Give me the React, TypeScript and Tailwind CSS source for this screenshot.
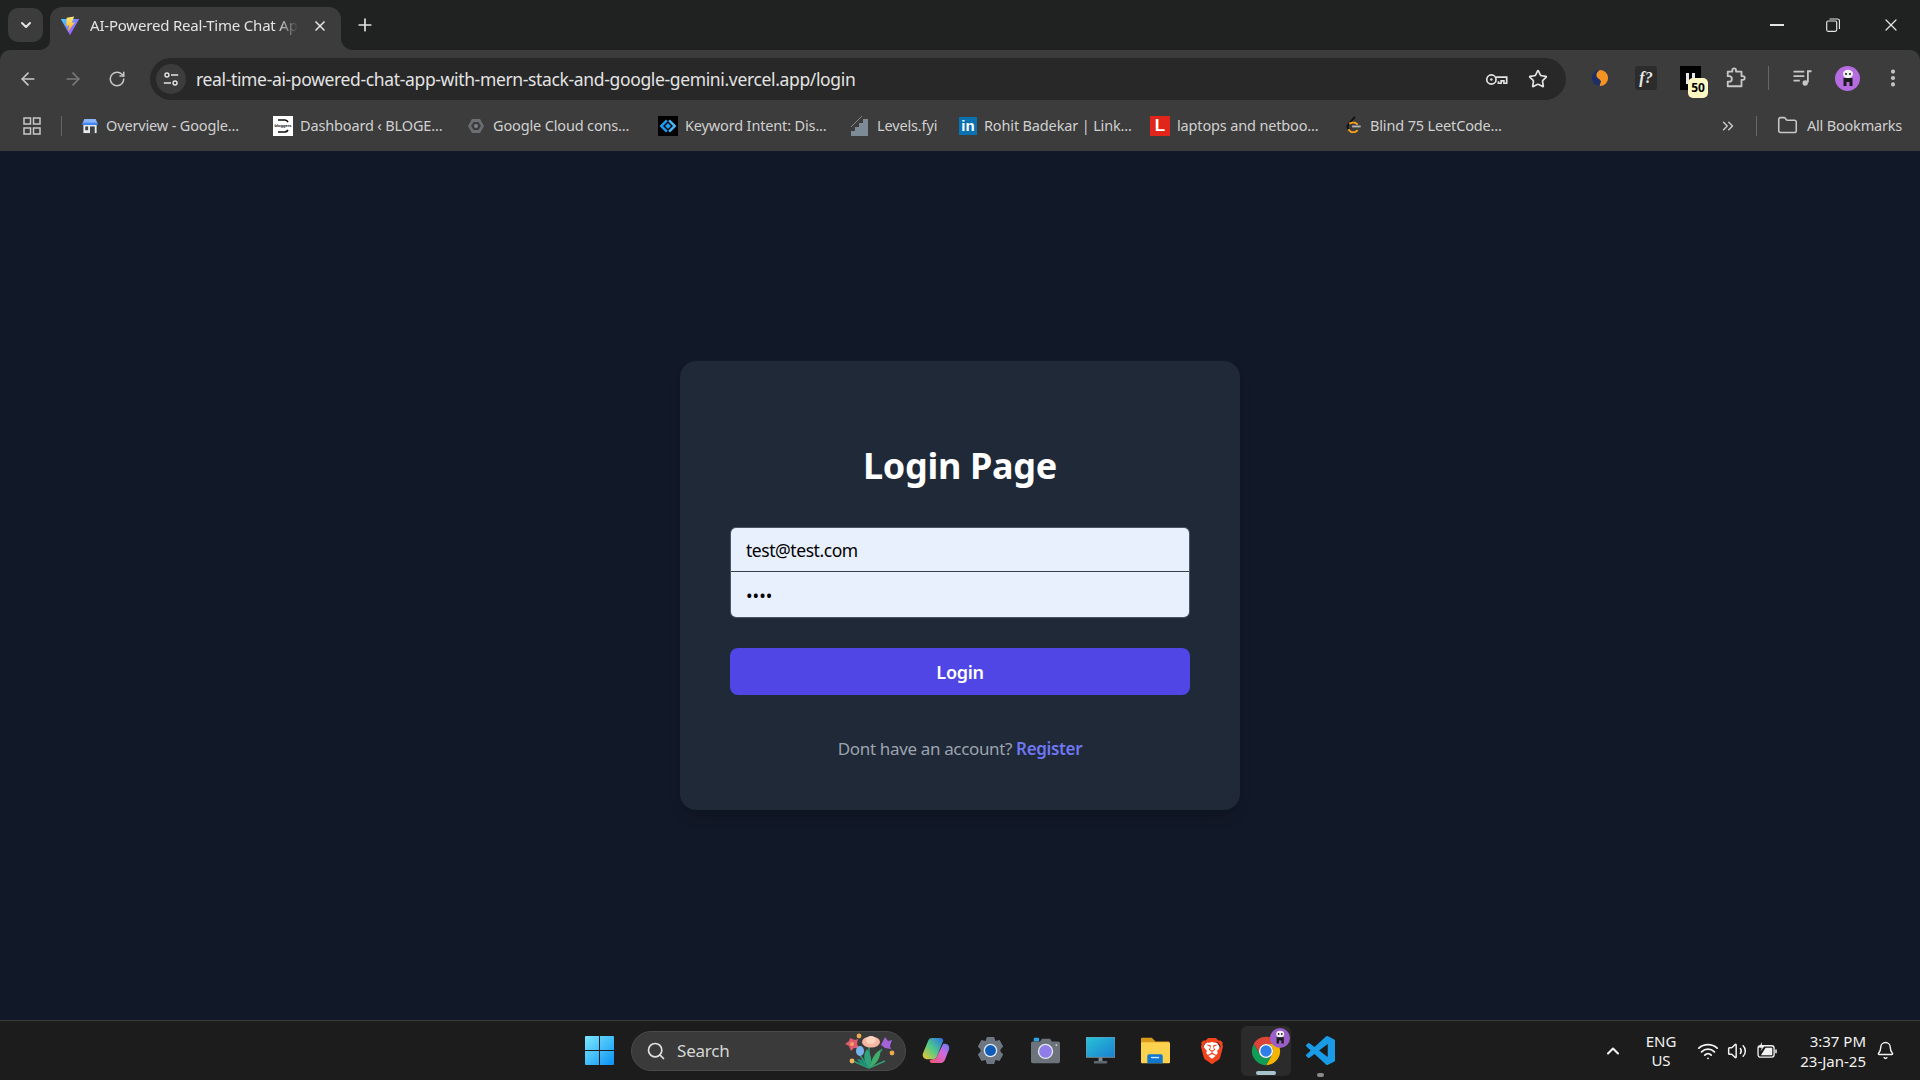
import { ArrowLeft, ArrowRight, RotateCw, Star, X, Plus, ChevronDown, ChevronUp, ChevronsRight, Folder, Search, Wifi, Volume2, Bell, EllipsisVertical } from "lucide-react";
import { SiBrave } from "react-icons/si";

const font = "font-['Noto_Sans','Open_Sans',sans-serif]";

function ViteIcon() {
  return (
    <svg viewBox="0 0 24 24" className="w-[20px] h-[20px] shrink-0">
      <defs>
        <linearGradient id="vitebg" x1="0" y1="0" x2="1" y2="1">
          <stop offset="0" stopColor="#41d1ff" />
          <stop offset="1" stopColor="#bd34fe" />
        </linearGradient>
        <linearGradient id="vitebolt" x1="0" y1="0" x2="0" y2="1">
          <stop offset="0" stopColor="#ffea83" />
          <stop offset="1" stopColor="#ffa800" />
        </linearGradient>
      </defs>
      <path d="M1 3.5 L23 3.5 L12 23 Z" fill="url(#vitebg)" />
      <path d="M17 0.5 L8 2 L7.5 12 L11 11 L9.5 19 L18 7.5 L14 8.5 Z" fill="url(#vitebolt)" />
    </svg>
  );
}

function TuneIcon() {
  return (
    <svg viewBox="0 0 20 20" className="w-[18px] h-[18px]" fill="none" stroke="#e3e3e3" strokeWidth="1.6">
      <circle cx="5.5" cy="5.5" r="2.2" />
      <path d="M10 5.5h8M2 14.5h8" />
      <circle cx="14.5" cy="14.5" r="2.2" />
    </svg>
  );
}

function KeyIcon() {
  return (
    <svg viewBox="0 0 24 14" className="w-[23px] h-[13px]" fill="none" stroke="#e3e3e3" strokeWidth="1.8">
      <circle cx="6.5" cy="7" r="5" />
      <circle cx="6.5" cy="7" r="1.3" fill="#e3e3e3" stroke="none" />
      <path d="M11.5 4.5H23V11h-3V8.5h-3V11h-3V9" />
    </svg>
  );
}

function AppsIcon() {
  return (
    <svg viewBox="0 0 18 18" className="w-[18px] h-[18px] shrink-0" fill="none" stroke="#c7c7c7" strokeWidth="1.5">
      <rect x="1" y="1" width="6.5" height="6" />
      <rect x="10.5" y="1" width="6.5" height="6" />
      <rect x="1" y="11" width="6.5" height="6" />
      <rect x="10.5" y="11" width="6.5" height="6" />
    </svg>
  );
}

function StoreIcon() {
  return (
    <svg viewBox="0 0 18 18" className="w-[18px] h-[17px]">
      <path d="M3 2h12l2 5H1z" fill="#8ab4f8" />
      <rect x="1" y="6" width="16" height="2.5" fill="#4285f4" />
      <rect x="2" y="8.5" width="14" height="8.5" fill="#e8eaed" />
      <rect x="9" y="10" width="5" height="7" fill="#3c4043" />
      <rect x="4" y="10" width="3" height="4" fill="#3c4043" />
    </svg>
  );
}

function BloggerIcon() {
  return (
    <div className="w-[20px] h-[20px] bg-white relative flex items-center justify-center overflow-hidden">
      <svg viewBox="0 0 20 20" className="absolute inset-0 w-full h-full" fill="none" stroke="#111" strokeWidth="1.6">
        <path d="M5 4h7a4 4 0 0 1 3 2M5 16h7a4 4 0 0 0 3-2" />
      </svg>
      <span className="text-[4px] leading-none text-black font-bold font-['Liberation_Sans',sans-serif]">bloggers</span>
    </div>
  );
}

function CloudIcon() {
  return (
    <svg viewBox="0 0 18 18" className="w-[20px] h-[18px]" fill="none">
      <path d="M5 2h8l4 7-4 7H5L1 9z" fill="#6b6f73" />
      <path d="M6.5 5h5L14 9l-2.5 4h-5L4 9z" fill="#3c3c3c" />
      <circle cx="9" cy="9" r="2" fill="#7d8084" />
    </svg>
  );
}

function KeywordIcon() {
  return (
    <svg viewBox="0 0 20 20" className="w-[20px] h-[20px]">
      <rect width="20" height="20" fill="#000" />
      <path d="M8 3.5L1.5 10 8 16.5l1.800-1.800L5 10l4.800-4.700z" fill="#1d9bf0" />
      <path d="M12 3.5l6.500 6.500-6.500 6.500-1.800-1.800L15 10l-4.800-4.700z" fill="#49b6f5" />
      <path d="M10 7l3 3-3 3-3-3z" fill="#1d9bf0" />
    </svg>
  );
}

function LevelsIcon() {
  return (
    <svg viewBox="0 0 20 20" className="w-[20px] h-[20px]">
      <path d="M1 20v-5h4v-4h4V7h4V3h5v17z" fill="#7c8b96" />
      <path d="M1 11L12 0" stroke="#7c8b96" strokeWidth="1" />
    </svg>
  );
}

function LinkedinIcon() {
  return (
    <div className="w-[18px] h-[18px] bg-[#0a72b1] flex items-center justify-center text-white text-[15px] font-bold leading-none font-['Liberation_Sans',sans-serif]">
      in
    </div>
  );
}

function LaptopIcon() {
  return (
    <div className="w-[20px] h-[20px] bg-[#e1251b] flex items-center justify-center text-white text-[17px] font-bold leading-none font-['Liberation_Sans',sans-serif]">
      L
    </div>
  );
}

function LeetIcon() {
  return (
    <svg viewBox="0 0 18 20" className="w-[18px] h-[19px]" fill="none" strokeWidth="2">
      <path d="M10 1L3 9l-1 2 1 3" stroke="#111" />
      <path d="M3 14l3 3h4l3-2" stroke="#f89f1b" />
      <path d="M4 8l3-1h3l3 2" stroke="#f89f1b" />
      <path d="M7 11h9" stroke="#b3b3b3" />
    </svg>
  );
}

function SphereIcon() {
  return (
    <svg viewBox="0 0 20 20" className="w-[18px] h-[20px]">
      <circle cx="10" cy="10" r="9" fill="#1c2f66" />
      <path d="M10 1a9 9 0 0 1 0 18c-1-1 1-3 1-5 0-3-5-3-5-7 0-3 2-5 4-6z" fill="#f59322" />
    </svg>
  );
}

function PuzzleIcon() {
  return (
    <svg viewBox="0 0 24 24" className="w-[22px] h-[22px]" fill="none" stroke="#c7c7c7" strokeWidth="2">
      <path d="M3 5h5V3.5a2 2 0 0 1 4 0V5h6v5h1.5a2 2 0 0 1 0 4H18v7H3v-5h1.5a3 3 0 0 0 0-6H3z" strokeLinejoin="round" />
    </svg>
  );
}

function MediaIcon() {
  return (
    <svg viewBox="0 0 22 20" className="w-[21px] h-[18px]" fill="none" stroke="#c7c7c7" strokeWidth="2">
      <path d="M1 3h12M1 8h12M1 13h7" />
      <path d="M17 15V2.5h4" />
      <circle cx="14" cy="15.5" r="3" fill="#c7c7c7" stroke="none" />
    </svg>
  );
}

function PandaAvatar({ size }: { size: "lg" | "sm" }) {
  return (
    <div
      className={
        size === "lg"
          ? "w-[25px] h-[25px] rounded-full bg-[#b46ce0] flex items-center justify-center"
          : "w-[20px] h-[20px] rounded-full bg-[#9c5fc8] flex items-center justify-center"
      }
    >
      <svg viewBox="0 0 16 18" className="w-[72%] h-[72%]">
        <ellipse cx="8" cy="5" rx="5" ry="4.2" fill="#f1f1f1" />
        <circle cx="6" cy="5" r="1.1" fill="#222" />
        <circle cx="10" cy="5" r="1.1" fill="#222" />
        <path d="M3.5 9h9v8h-3v-4h-3v4h-3z" fill="#1c1c1c" />
      </svg>
    </div>
  );
}

function WindowsLogo() {
  return (
    <svg viewBox="0 0 29 29" className="w-[29px] h-[29px]">
      <defs>
        <linearGradient id="win" x1="0" y1="0" x2="1" y2="1">
          <stop offset="0" stopColor="#7ce8ff" />
          <stop offset="1" stopColor="#0a93f5" />
        </linearGradient>
      </defs>
      <path d="M1 0h13v14H0V1a1 1 0 0 1 1-1zM15 0h13a1 1 0 0 1 1 1v13H15zM0 15h14v14H1a1 1 0 0 1-1-1zM15 15h14v13a1 1 0 0 1-1 1H15z" fill="url(#win)" />
    </svg>
  );
}

function Flowers() {
  return (
    <svg viewBox="0 0 56 40" className="w-[56px] h-[40px]">
      <g stroke="#2f9e77" strokeWidth="1.4" fill="none">
        <path d="M28 37 L16 20M28 37 L28 16M28 37 L41 18M28 37 L12 30M28 37 L44 30" />
      </g>
      <path d="M28 36c-6-6-6-13-2-18 4 6 6 12 2 18z" fill="#2ea37c" />
      <path d="M29 36c1-8 5-14 10-17 1 7-3 14-10 17z" fill="#3fae6a" />
      <path d="M27 36c-5-1-9-4-11-8 5 0 9 3 11 8z" fill="#1f8f7a" />
      <ellipse cx="30" cy="11" rx="9" ry="5.5" fill="#f6b7a0" />
      <ellipse cx="30" cy="9" rx="5" ry="4" fill="#fbd3bf" />
      <path d="M9 7l5 2 3-1-1 5 2 4-5 0-3 3-2-5-4-2 4-3z" fill="#df5a6d" />
      <circle cx="11" cy="13" r="2" fill="#f3a15c" />
      <path d="M44 6l3 4 4-1-2 6 1 3-6-1-4-3z" fill="#a563d8" />
      <ellipse cx="19" cy="20" rx="4" ry="5" fill="#78b4ec" />
      <circle cx="18" cy="5" r="2.4" fill="#eaa94e" />
      <circle cx="11" cy="30" r="2.4" fill="#f0b660" />
      <circle cx="51" cy="22" r="2.4" fill="#eaa94e" />
    </svg>
  );
}

function CopilotIcon() {
  return (
    <svg viewBox="0 0 30 30" className="w-[29px] h-[29px]">
      <defs>
        <linearGradient id="cpa" x1="0" y1="1" x2="1" y2="0">
          <stop offset="0" stopColor="#f7c62f" />
          <stop offset="0.5" stopColor="#4cc98a" />
          <stop offset="1" stopColor="#2b6de8" />
        </linearGradient>
        <linearGradient id="cpb" x1="0" y1="1" x2="1" y2="0">
          <stop offset="0" stopColor="#f2536a" />
          <stop offset="0.6" stopColor="#d36ae0" />
          <stop offset="1" stopColor="#5a7cf0" />
        </linearGradient>
      </defs>
      <path d="M12 2h8c2 0 3 1 3 3L17 20c-1 3-2 4-5 4H7c-4 0-6-3-5-6L7 6c1-3 2-4 5-4z" fill="url(#cpa)" />
      <path d="M23 8h2c3 0 5 3 4 6l-4 10c-1 3-3 4-5 4h-8c-2 0-3-1-3-3l3-1c3 0 4-1 5-4z" fill="url(#cpb)" />
    </svg>
  );
}

function SettingsIcon() {
  return (
    <svg viewBox="0 0 32 32" className="w-[31px] h-[31px]">
      <path d="M12 1h8l1.5 4.5 4.5-1 4 7-3 3.5v2l3 3.5-4 7-4.5-1L20 31h-8l-1.5-4.5-4.5 1-4-7 3-3.5v-2l-3-3.5 4-7 4.5 1z" fill="#6e7681" />
      <circle cx="16" cy="16" r="7.5" fill="#dfe7ef" />
      <circle cx="16" cy="16" r="6" fill="#0f5cb8" />
    </svg>
  );
}

function CameraIcon() {
  return (
    <svg viewBox="0 0 32 28" className="w-[31px] h-[27px]">
      <rect x="3" y="0" width="6" height="4" rx="1" fill="#2aa4e6" />
      <path d="M2 4h8l2-3h9l2 3h7a2 2 0 0 1 2 2v20a2 2 0 0 1-2 2H2a2 2 0 0 1-2-2V6a2 2 0 0 1 2-2z" fill="#6c737b" />
      <circle cx="16" cy="15" r="8.5" fill="#e6e9ee" />
      <circle cx="16" cy="15" r="7" fill="#8f7de8" />
      <circle cx="28" cy="8" r="1" fill="#d5d9de" />
    </svg>
  );
}

function MonitorIcon() {
  return (
    <svg viewBox="0 0 30 28" className="w-[29px] h-[27px]">
      <defs>
        <linearGradient id="mon" x1="0" y1="0" x2="1" y2="1">
          <stop offset="0" stopColor="#29c3d8" />
          <stop offset="1" stopColor="#1a7fd0" />
        </linearGradient>
      </defs>
      <rect x="0" y="0" width="30" height="21" fill="url(#mon)" stroke="#8b99a5" strokeWidth="0.8" />
      <rect x="13" y="21" width="4" height="4" fill="#7d8a94" />
      <rect x="8" y="25" width="14" height="2.5" rx="1" fill="#5d6870" />
    </svg>
  );
}

function FolderIcon() {
  return (
    <svg viewBox="0 0 32 28" className="w-[31px] h-[27px]">
      <path d="M1 0h11l4 4h15v6H0V1a1 1 0 0 1 1-1z" fill="#d99a1c" />
      <path d="M0 5h31a1 1 0 0 1 1 1v21a1 1 0 0 1-1 1H1a1 1 0 0 1-1-1z" fill="#fcd14d" />
      <path d="M7 28v-8a2 2 0 0 1 2-2h13a2 2 0 0 1 2 2v8z" fill="#0e78d1" />
      <rect x="11" y="21" width="9" height="1.5" fill="#cfe8fb" />
    </svg>
  );
}

function BraveIcon() {
  return (
    <div className="relative w-[26px] h-[30px] flex items-center justify-center">
      <div className="absolute w-[17px] h-[19px] rounded-full bg-white" />
      <SiBrave className="relative w-[28px] h-[30px] text-[#f1441d]" />
    </div>
  );
}

function ChromeIcon() {
  return (
    <svg viewBox="0 0 48 48" className="w-[34px] h-[34px]">
      <path d="M24 4A20 20 0 0 1 41.32 14H24a10 10 0 0 0-8.66 15L6.68 14A20 20 0 0 1 24 4z" fill="#db4437" />
      <path d="M41.32 14A20 20 0 0 1 24 44L32.66 29A10 10 0 0 0 24 14z" fill="#f4b400" />
      <path d="M24 44A20 20 0 0 1 6.68 14L15.34 29a10 10 0 0 0 17.32 0z" fill="#0f9d58" />
      <circle cx="24" cy="24" r="10" fill="#fff" />
      <circle cx="24" cy="24" r="8" fill="#2f7de6" />
    </svg>
  );
}

function VscodeIcon() {
  return (
    <svg viewBox="0 0 24 24" className="w-[29px] h-[29px]" fill="#1a9be6">
      <path d="M23.15 2.587L18.21.21a1.494 1.494 0 0 0-1.705.29l-9.46 8.63-4.12-3.128a.999.999 0 0 0-1.276.057L.327 7.261A1 1 0 0 0 .326 8.74L3.899 12 .326 15.26a1 1 0 0 0 .001 1.479L1.65 17.94a.999.999 0 0 0 1.276.057l4.12-3.128 9.46 8.63a1.492 1.492 0 0 0 1.704.29l4.942-2.377A1.5 1.5 0 0 0 24 20.06V3.939a1.5 1.5 0 0 0-.85-1.352zm-5.146 14.861L10.826 12l7.178-5.448v10.896z" />
    </svg>
  );
}

function BatteryIcon() {
  return (
    <svg viewBox="0 0 22 18" className="w-[21px] h-[17px]" fill="none">
      <rect x="1" y="4" width="17" height="12" rx="2.5" stroke="#f2f2f2" strokeWidth="1.4" />
      <path d="M9 6h7v8H4z" fill="#f2f2f2" />
      <path d="M20 8v4" stroke="#f2f2f2" strokeWidth="1.6" />
      <path d="M5 0L2 6h3L3.5 10 8 4H5z" fill="#f2f2f2" />
    </svg>
  );
}

const bookmarks = [
  { label: "Overview - Google...", icon: <StoreIcon />, box: "w-[211px] pl-[19px]" },
  { label: "Dashboard ‹ BLOGE...", icon: <BloggerIcon />, box: "w-[193px]" },
  { label: "Google Cloud cons...", icon: <CloudIcon />, box: "w-[192px]" },
  { label: "Keyword Intent: Dis...", icon: <KeywordIcon />, box: "w-[192px]" },
  { label: "Levels.fyi", icon: <LevelsIcon />, box: "w-[109px]" },
  { label: "Rohit Badekar | Link...", icon: <LinkedinIcon />, box: "w-[191px]" },
  { label: "laptops and netboo...", icon: <LaptopIcon />, box: "w-[195px]" },
  { label: "Blind 75 LeetCode...", icon: <LeetIcon />, box: "w-[180px]" },
];

function TabStrip() {
  return (
    <div className="h-[50px] shrink-0 bg-[#202222] flex items-end pl-[8px]">
      <div className="w-[35px] h-[34px] mb-[8px] rounded-[10px] bg-[#3c3c3c] flex items-center justify-center">
        <ChevronDown className="w-[16px] h-[16px] text-[#e3e3e3]" strokeWidth={3} />
      </div>
      <div className="relative ml-[7px] w-[291px] h-[43px] bg-[#3c3c3c] rounded-t-[12px] flex items-center pl-[10px] pr-[10px] pb-[6px]">
        <ViteIcon />
        <span className="ml-[10px] w-[208px] overflow-hidden whitespace-nowrap text-[15px] tracking-[-0.2px] text-[#e3e3e3] pb-[1px] [mask-image:linear-gradient(to_right,black_90%,transparent)]">
          AI-Powered Real-Time Chat App
        </span>
        <X className="ml-[14px] w-[16px] h-[16px] text-[#e3e3e3]" strokeWidth={2.5} />
        <div className="absolute right-[-12px] bottom-0 w-[12px] h-[12px] bg-[#3c3c3c]">
          <div className="w-full h-full bg-[#202222] rounded-bl-[12px]" />
        </div>
        <div className="absolute left-[-10px] bottom-0 w-[10px] h-[10px] bg-[#3c3c3c]">
          <div className="w-full h-full bg-[#202222] rounded-br-[10px]" />
        </div>
      </div>
      <Plus className="ml-[14px] mb-[15px] w-[20px] h-[20px] text-[#e3e3e3]" strokeWidth={2} />
      <div className="flex-1" />
      <div className="flex items-center h-[50px] pr-[19px]">
        <div className="w-[14px] h-[1.5px] bg-[#e3e3e3]" />
        <svg viewBox="0 0 14 14" className="ml-[42px] w-[14px] h-[14px]" fill="none" stroke="#e3e3e3" strokeWidth="1.2">
          <rect x="0.7" y="3" width="10" height="10.3" rx="1.5" />
          <path d="M3.5 1h8a2 2 0 0 1 2 2v8" />
        </svg>
        <X className="ml-[41px] w-[20px] h-[20px] text-[#e3e3e3]" strokeWidth={1.5} />
      </div>
    </div>
  );
}

function Toolbar() {
  return (
    <div className="h-[50px] shrink-0 bg-[#3c3c3c] rounded-t-[10px] flex items-end">
      <div className="h-[42px] flex items-center w-[150px] pl-[18px] text-[#c7c7c7]">
        <ArrowLeft className="w-[20px] h-[20px]" strokeWidth={2} />
        <ArrowRight className="ml-[25px] w-[20px] h-[20px] text-[#7a7a7a]" strokeWidth={2} />
        <RotateCw className="ml-[25px] w-[18px] h-[18px]" strokeWidth={2} />
      </div>
      <div className="w-[1416px] h-[42px] rounded-full bg-[#282828] flex items-center pl-[6px] pr-[18px]">
        <div className="w-[30px] h-[30px] rounded-full bg-[#3c3c3c] flex items-center justify-center">
          <TuneIcon />
        </div>
        <span className="ml-[10px] text-[17.5px] tracking-[-0.35px] text-[#e3e3e3] whitespace-nowrap">
          real-time-ai-powered-chat-app-with-mern-stack-and-google-gemini.vercel.app/login
        </span>
        <div className="flex-1" />
        <KeyIcon />
        <Star className="ml-[20px] w-[20px] h-[20px] text-[#e3e3e3]" strokeWidth={2} />
      </div>
      <div className="relative h-[42px] flex-1 flex items-center pb-[2px]">
        <div className="ml-[25px]">
          <SphereIcon />
        </div>
        <div className="ml-[26px] w-[22px] h-[24px] rounded-[3px] bg-[#2c2c2c] flex items-center justify-center text-[16px] italic font-bold text-[#e8e8e8] font-['Liberation_Serif',serif]">
          f?
        </div>
        <div className="relative ml-[23px] w-[21px] h-[24px] bg-black flex justify-center">
          <div className="flex gap-[3px] pt-[7px]">
            <div className="w-[3px] h-[11px] bg-[#e8e8e8]" />
            <div className="w-[3px] h-[8px] bg-[#e8e8e8]" />
          </div>
          <div className="absolute left-[8px] top-[12px] w-[20px] h-[20px] rounded-[5px] bg-[#fdf8c3] flex items-center justify-center text-[12px] font-bold text-black">
            50
          </div>
        </div>
        <div className="ml-[24px]">
          <PuzzleIcon />
        </div>
        <div className="ml-[21px] w-[1px] h-[24px] bg-[#666]" />
        <div className="ml-[23px]">
          <MediaIcon />
        </div>
        <div className="ml-[22px]">
          <PandaAvatar size="lg" />
        </div>
        <EllipsisVertical className="ml-[22px] w-[22px] h-[22px] text-[#c7c7c7]" strokeWidth={2.5} />
      </div>
    </div>
  );
}

function BookmarksBar() {
  return (
    <div className="h-[51px] shrink-0 bg-[#3c3c3c] flex items-center pl-[23px] pr-[18px]">
      <AppsIcon />
      <div className="ml-[20px] w-[1px] h-[20px] bg-[#666]" />
      {bookmarks.map((b) => (
        <div key={b.label} className={`${b.box} shrink-0 flex items-center gap-[7px]`}>
          {b.icon}
          <span className="text-[14.5px] tracking-[-0.15px] text-[#d0d0d0] whitespace-nowrap">{b.label}</span>
        </div>
      ))}
      <div className="flex-1" />
      <ChevronsRight className="w-[18px] h-[18px] text-[#c7c7c7]" strokeWidth={2} />
      <div className="ml-[19px] w-[1px] h-[20px] bg-[#666]" />
      <Folder className="ml-[20px] w-[21px] h-[21px] text-[#c7c7c7]" strokeWidth={1.8} />
      <span className="ml-[9px] text-[14.5px] tracking-[-0.2px] text-[#d0d0d0] whitespace-nowrap">All Bookmarks</span>
    </div>
  );
}

function LoginCard() {
  return (
    <div className="w-[560px] h-[449px] rounded-2xl bg-[#1f2937] shadow-lg px-[50px] pt-[85px]">
      <h1 className="text-center text-[36px] leading-[40px] font-bold text-white tracking-[-0.3px]">Login Page</h1>
      <div className="mt-[41px] rounded-md overflow-hidden border border-[#4b5563]">
        <input
          readOnly
          type="email"
          value="test@test.com"
          className="block w-full h-[44px] px-[15px] bg-[#e8f0fe] text-black text-[17.5px] tracking-[-0.45px] border-b border-[#374151] outline-none"
        />
        <input
          readOnly
          type="password"
          value="test"
          className="block w-full h-[45px] px-[15px] bg-[#e8f0fe] text-black text-[17.5px] outline-none"
        />
      </div>
      <button className="block mt-[30px] w-full h-[47px] pt-[1px] rounded-lg bg-[#4f46e5] text-white text-[18px] font-semibold tracking-[-0.3px]">
        Login
      </button>
      <p className="mt-[40px] text-center text-[17px] leading-[28px] tracking-[-0.35px] text-[#9ca3af]">
        Dont have an account? <span className="font-semibold text-[#6f76f2]">Register</span>
      </p>
    </div>
  );
}

function Taskbar() {
  return (
    <div className="h-[60px] shrink-0 bg-[#1c1c1c] border-t border-[#3a3a3a] flex items-center pl-[585px] text-[#f2f2f2]">
      <WindowsLogo />
      <div className="ml-[17px] w-[275px] h-[40px] rounded-full bg-[#3a3a3a] border border-[#4a4a4a] flex items-center pl-[14px] pr-[8px]">
        <Search className="w-[20px] h-[20px] text-[#e0e0e0]" strokeWidth={2} />
        <span className="ml-[11px] text-[17px] tracking-[-0.2px] text-[#d6d6d6]">Search</span>
        <div className="flex-1" />
        <Flowers />
      </div>
      <div className="ml-[15px] w-[29px] flex justify-center">
        <CopilotIcon />
      </div>
      <div className="ml-[26px] w-[29px] flex justify-center">
        <SettingsIcon />
      </div>
      <div className="ml-[26px] w-[29px] flex justify-center">
        <CameraIcon />
      </div>
      <div className="ml-[26px] w-[29px] flex justify-center">
        <MonitorIcon />
      </div>
      <div className="ml-[26px] w-[29px] flex justify-center">
        <FolderIcon />
      </div>
      <div className="ml-[27px] w-[29px] flex justify-center">
        <BraveIcon />
      </div>
      <div className="relative ml-[15px] w-[50px] h-[50px] rounded-md bg-[#2b2b2b] flex items-center justify-center">
        <ChromeIcon />
        <div className="absolute right-[1px] top-[2px]">
          <PandaAvatar size="sm" />
        </div>
        <div className="absolute bottom-[1px] left-[15px] w-[20px] h-[4px] rounded-full bg-[#a9c3cc]" />
      </div>
      <div className="relative ml-[15px] w-[29px] flex justify-center">
        <VscodeIcon />
        <div className="absolute bottom-[-12px] w-[7px] h-[4px] rounded-full bg-[#8a8a8a]" />
      </div>
      <div className="flex-1" />
      <ChevronUp className="w-[20px] h-[20px]" strokeWidth={2.5} />
      <div className="ml-[14px] w-[48px] text-center text-[15px] leading-[19px]">
        <div>ENG</div>
        <div>US</div>
      </div>
      <Wifi className="ml-[12px] w-[22px] h-[22px]" strokeWidth={2} />
      <Volume2 className="ml-[8px] w-[20px] h-[20px]" strokeWidth={1.8} />
      <div className="ml-[10px]">
        <BatteryIcon />
      </div>
      <div className="ml-[8px] w-[80px] text-right text-[15px] leading-[20px]">
        <div>3:37 PM</div>
        <div>23-Jan-25</div>
      </div>
      <Bell className="ml-[10px] mr-[25px] w-[19px] h-[19px]" strokeWidth={1.8} />
    </div>
  );
}

export default function App() {
  return (
    <div className={`h-screen w-full flex flex-col overflow-hidden bg-[#202222] ${font}`}>
      <TabStrip />
      <Toolbar />
      <BookmarksBar />
      <main className="flex-1 bg-[#111827] flex items-center justify-center">
        <LoginCard />
      </main>
      <Taskbar />
    </div>
  );
}
